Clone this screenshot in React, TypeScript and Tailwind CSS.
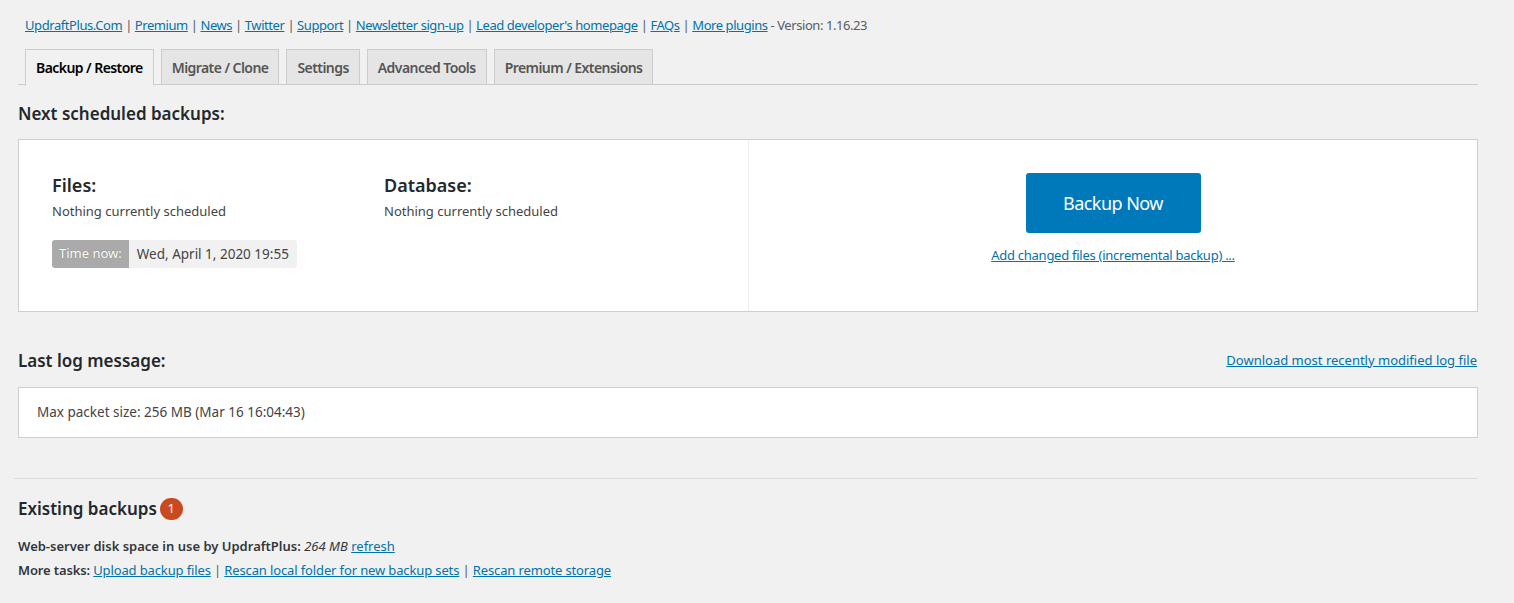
import React from "react";

const font = { fontFamily: '"Noto Sans", "Open Sans", sans-serif' };

function L({ children }: { children: React.ReactNode }) {
  return <a className="text-[#0073aa] underline cursor-pointer">{children}</a>;
}

function Sep() {
  return <span className="text-[#555d66]"> | </span>;
}

export default function App() {
  const topLinks = [
    "UpdraftPlus.Com",
    "Premium",
    "News",
    "Twitter",
    "Support",
    "Newsletter sign-up",
    "Lead developer's homepage",
    "FAQs",
    "More plugins",
  ];
  const tabs = ["Backup / Restore", "Migrate / Clone", "Settings", "Advanced Tools", "Premium / Extensions"];
  return (
    <div className="min-h-[603px] bg-[#f1f1f1] text-[#444] text-[13px]" style={font}>
      <div className="pl-[18px] w-[1478px]">
        <div className="pl-[7px] pt-[15px] h-[37px] leading-[20px] whitespace-nowrap tracking-[-0.033em]">
          {topLinks.map((t, i) => (
            <React.Fragment key={t}>
              {i > 0 && <Sep />}
              <L>{t}</L>
            </React.Fragment>
          ))}
          <span className="text-[#555d66]"> - Version: 1.16.23</span>
        </div>
        <div className="mt-[12px] flex gap-[7px] pl-[7px] border-b border-[#ccc] h-[36px]">
          {tabs.map((t, i) => (
            <div
              key={t}
              className={
                "h-[36px] px-[10px] flex items-center text-[14px] font-semibold tracking-[-0.04em] border border-[#ccc] whitespace-nowrap " +
                (i === 0 ? "bg-[#f1f1f1] text-black border-b-[#f1f1f1] h-[37px]" : "bg-[#e5e5e5] text-[#555]")
              }
            >
              {t}
            </div>
          ))}
        </div>
        <h2 className="mt-[17px] text-[17px] font-semibold text-[#23282d] leading-[24px]">Next scheduled backups:</h2>
        <div className="mt-[13px] bg-white border border-[#ccd0d4] h-[173px] flex">
          <div className="w-[730px] border-r border-[#eee] pl-[33px] pt-[33px]">
            <div className="flex">
              <div className="w-[332px]">
                <div className="text-[18px] font-semibold text-[#23282d] leading-[24px]">Files:</div>
                <div className="mt-[4px] leading-[20px]">Nothing currently scheduled</div>
              </div>
              <div>
                <div className="text-[18px] font-semibold text-[#23282d] leading-[24px]">Database:</div>
                <div className="mt-[4px] leading-[20px]">Nothing currently scheduled</div>
              </div>
            </div>
            <div className="mt-[19px] inline-flex h-[28px] rounded-[3px] overflow-hidden">
              <span className="bg-[#aaa] text-white px-[7px] flex items-center text-[13px] [text-shadow:0_0_1px_rgba(0,0,0,0.3)]">Time now:</span>
              <span className="bg-[#f1f1f1] text-[#444] px-[8px] flex items-center text-[13.5px]">Wed, April 1, 2020 19:55</span>
            </div>
          </div>
          <div className="flex-1 flex flex-col items-center pt-[33px]">
            <button className="w-[175px] h-[60px] bg-[#0079ba] text-white text-[18px] rounded-[3px] tracking-[-0.03em]">Backup Now</button>
            <div className="mt-[12px] leading-[20px] tracking-[-0.02em]">
              <L>Add changed files (incremental backup) ...</L>
            </div>
          </div>
        </div>
        <div className="mt-[37px] flex justify-between items-end">
          <h2 className="text-[17px] font-semibold text-[#23282d] leading-[24px]">Last log message:</h2>
          <div className="pr-[1px] leading-[20px] mb-[3px]">
            <L>Download most recently modified log file</L>
          </div>
        </div>
        <div className="mt-[14px] bg-white border border-[#ccd0d4] h-[51px] flex items-center pl-[18px] text-[13.5px]">
          Max packet size: 256 MB (Mar 16 16:04:43)
        </div>
        <div className="mt-[40px] border-t border-[#ddd] -ml-[4px]" />
        <div className="mt-[18px] flex items-center gap-[3px]">
          <h2 className="text-[17px] font-semibold text-[#23282d] leading-[24px]">Existing backups</h2>
          <span className="w-[23px] h-[22px] rounded-full bg-[#ca4a1f] text-white text-[13px] flex items-center justify-center">1</span>
        </div>
        <div className="mt-[13px] leading-[24px] text-[#32373c]">
          <div>
            <span className="font-semibold">Web-server disk space in use by UpdraftPlus:</span> <em>264 MB</em> <L>refresh</L>
          </div>
          <div className="tracking-[-0.01em]">
            <span className="font-semibold">More tasks:</span> <L>Upload backup files</L>
            <Sep />
            <L>Rescan local folder for new backup sets</L>
            <Sep />
            <L>Rescan remote storage</L>
          </div>
        </div>
      </div>
    </div>
  );
}
